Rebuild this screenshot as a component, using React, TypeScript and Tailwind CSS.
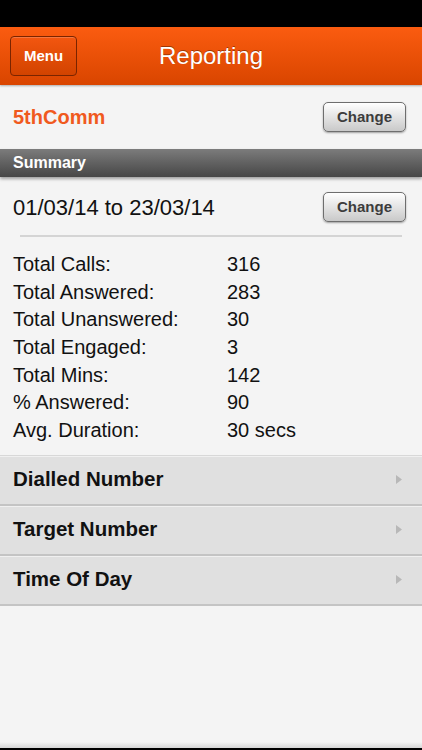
const STATS = [
  ["Total Calls:", "316"],
  ["Total Answered:", "283"],
  ["Total Unanswered:", "30"],
  ["Total Engaged:", "3"],
  ["Total Mins:", "142"],
  ["% Answered:", "90"],
  ["Avg. Duration:", "30 secs"],
];

const REPORTS = ["Dialled Number", "Target Number", "Time Of Day"];

function ChangeButton() {
  return (
    <button className="h-[30px] w-[83px] rounded-[5px] border border-[#6e6e6e] bg-gradient-to-b from-[#ffffff] to-[#c9c9c9] text-[15px] font-bold text-[#3c3c3c] shadow-[0_1px_2px_rgba(0,0,0,0.35)]">
      Change
    </button>
  );
}

export default function App() {
  return (
    <div className="flex h-[750px] w-[422px] flex-col overflow-hidden bg-[#f4f4f4] font-['Liberation_Sans',Arial,sans-serif]">
      <div className="h-[27px] bg-black" />
      <header className="relative flex h-[58px] items-center justify-center bg-gradient-to-b from-[#fb5c10] to-[#d94500] shadow-[0_1px_2px_rgba(0,0,0,0.3)]">
        <button className="absolute left-[10px] top-[9px] h-[40px] w-[67px] rounded-[4px] border border-[#7a2400] bg-gradient-to-b from-[#f35610] to-[#d24300] text-[15px] font-bold text-white shadow-[inset_0_1px_0_rgba(255,255,255,0.2)]">
          Menu
        </button>
        <h1 className="text-[24px] text-white [text-shadow:0_-1px_0_rgba(0,0,0,0.35)]">Reporting</h1>
      </header>

      <div className="flex h-[64px] items-center justify-between pl-[13px] pr-[16px]">
        <span className="text-[20px] font-bold text-[#f05a1e]">5thComm</span>
        <ChangeButton />
      </div>

      <div className="flex h-[28px] items-center bg-gradient-to-b from-[#7c7c7c] to-[#474747] pl-[13px] text-[16px] font-bold text-white shadow-[0_2px_3px_rgba(0,0,0,0.35)]">
        Summary
      </div>

      <div className="flex h-[58px] items-center justify-between pl-[13px] pr-[16px] pt-[2px]">
        <span className="text-[22px] text-[#111]">01/03/14 to 23/03/14</span>
        <ChangeButton />
      </div>
      <div className="mx-[20px] h-[2px] bg-[#d4d4d4]" />

      <div className="flex flex-col pl-[13px] pt-[13px] text-[20px] text-[#111]">
        {STATS.map(([label, value]) => (
          <div key={label} className="flex h-[27.7px] items-center">
            <span className="w-[214px]">{label}</span>
            <span>{value}</span>
          </div>
        ))}
      </div>

      <div className="mt-[11px] flex flex-col border-t border-[#d8d8d8]">
        {REPORTS.map((name) => (
          <div
            key={name}
            className="flex h-[50px] items-center justify-between border-b-2 border-[#c4c4c4] bg-[#e0e0e0] pl-[13px] pr-[20px] shadow-[inset_0_1px_0_#f0f0f0]"
          >
            <span className="text-[20.5px] font-bold text-[#111]">{name}</span>
            <svg width="6" height="9" viewBox="0 0 6 9">
              <path d="M0 0 L6 4.5 L0 9 Z" fill="#b8b8b8" />
            </svg>
          </div>
        ))}
      </div>

      <div className="flex-1" />
      <div className="h-[6px] bg-gradient-to-b from-[#f4f4f4] to-[#d6d6d6]" />
      <div className="h-[2px] bg-black" />
    </div>
  );
}
